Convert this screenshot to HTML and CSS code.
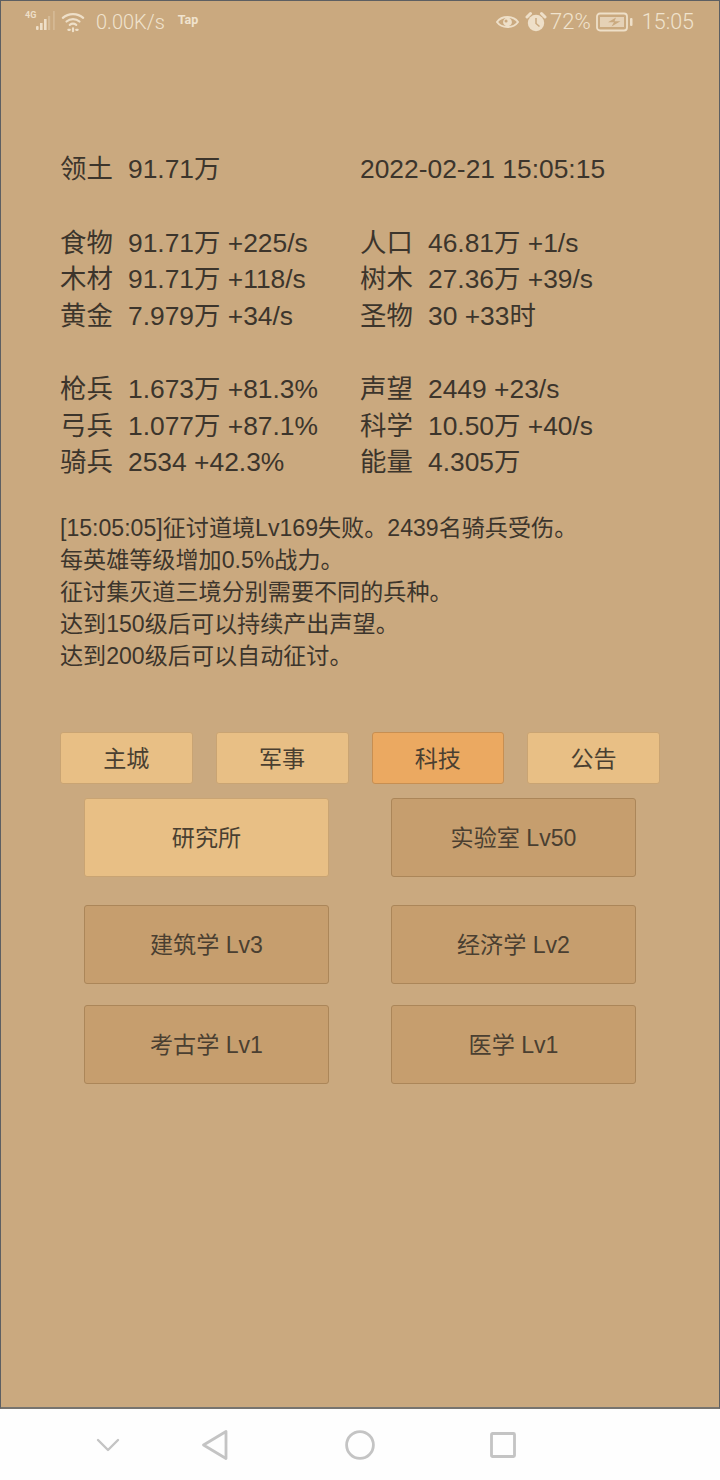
FILE: index.html
```html
<!DOCTYPE html>
<html lang="zh">
<head>
<meta charset="utf-8">
<title>Game</title>
<link rel="stylesheet" href="styles.css">
</head>
<body>
<div class="screen">
  <header class="status">
    <div class="status-left">
      <svg class="ic-signal" width="32" height="24" viewBox="0 0 32 24">
        <text x="1" y="8" class="net">4G</text>
        <rect x="12" y="16" width="2.600" height="4" rx="1" fill="#eedfc8"/>
        <rect x="16" y="13" width="2.600" height="7" fill="#eedfc8"/>
        <rect x="20" y="9" width="2.600" height="11" fill="#eedfc8"/>
        <rect x="24" y="6" width="2.200" height="14" fill="#eedfc8" opacity=".35"/>
        <rect x="29" y="1" width="1.800" height="19" fill="#eedfc8" opacity=".3"/>
      </svg>
      <svg class="ic-wifi" width="24" height="22" viewBox="0 0 26 22" fill="none" stroke="#eedfc8" stroke-width="2.400" stroke-linecap="round">
        <path d="M2 6.500C8 1 18 1 24 6.500"/>
        <path d="M6 10.500C10 7 16 7 20 10.500"/>
        <path d="M9.500 14C11.500 12.500 14.500 12.500 16.500 14"/>
        <path d="M8 19.500h1.500M13 18v3M16.500 19.500h1.500"/>
      </svg>
      <span class="speed">0.00K/s</span>
      <span class="tap">Tap</span>
    </div>
    <div class="status-right">
      <svg width="23" height="16" viewBox="0 0 24 16">
        <path d="M1 8C6 1 18 1 23 8C18 15 6 15 1 8Z" fill="none" stroke="#eedfc8" stroke-width="2"/>
        <circle cx="12" cy="8" r="4.600" fill="#eedfc8"/>
        <circle cx="10.500" cy="7" r="1.600" fill="#caa97f"/>
      </svg>
      <svg class="ic-alarm" width="22" height="22" viewBox="0 0 22 22">
        <circle cx="11" cy="12" r="8.200" fill="#eedfc8"/>
        <path d="M2 6L5.500 2.500M20 6L16.500 2.500" stroke="#eedfc8" stroke-width="3" stroke-linecap="round"/>
        <path d="M11 7v5.500l3.500 3" fill="none" stroke="#caa97f" stroke-width="1.500"/>
      </svg>
      <span class="batt-text">72%</span>
      <svg class="ic-batt" width="37" height="20" viewBox="0 0 37 20">
        <rect x="1" y="1.500" width="30" height="17" rx="3" fill="none" stroke="#eedfc8" stroke-width="1.800"/>
        <rect x="4" y="5" width="24" height="10" fill="#eedfc8" opacity=".75"/>
        <path d="M20 5.500l-8 4.800h6l-2.500 4.200 9-5.200h-6z" fill="#caa97f"/>
        <rect x="34" y="6" width="2.500" height="8" rx="1" fill="#eedfc8"/>
      </svg>
      <span class="clock">15:05</span>
    </div>
  </header>

  <main class="content">
    <section class="stats">
      <div class="cell"><b>领土</b><span>91.71万</span></div>
      <div class="cell"><span class="solo">2022-02-21 15:05:15</span></div>
      <div class="blank"></div>
      <div class="cell"><b>食物</b><span>91.71万 +225/s</span></div>
      <div class="cell"><b>人口</b><span>46.81万 +1/s</span></div>
      <div class="cell"><b>木材</b><span>91.71万 +118/s</span></div>
      <div class="cell"><b>树木</b><span>27.36万 +39/s</span></div>
      <div class="cell"><b>黄金</b><span>7.979万 +34/s</span></div>
      <div class="cell"><b>圣物</b><span>30 +33时</span></div>
      <div class="blank"></div>
      <div class="cell"><b>枪兵</b><span>1.673万 +81.3%</span></div>
      <div class="cell"><b>声望</b><span>2449 +23/s</span></div>
      <div class="cell"><b>弓兵</b><span>1.077万 +87.1%</span></div>
      <div class="cell"><b>科学</b><span>10.50万 +40/s</span></div>
      <div class="cell"><b>骑兵</b><span>2534 +42.3%</span></div>
      <div class="cell"><b>能量</b><span>4.305万</span></div>
    </section>

    <section class="log">
      <p>[15:05:05]征讨道境Lv169失败。2439名骑兵受伤。</p>
      <p>每英雄等级增加0.5%战力。</p>
      <p>征讨集灭道三境分别需要不同的兵种。</p>
      <p>达到150级后可以持续产出声望。</p>
      <p>达到200级后可以自动征讨。</p>
    </section>

    <nav class="tabs">
      <button class="tab">主城</button>
      <button class="tab">军事</button>
      <button class="tab active">科技</button>
      <button class="tab">公告</button>
    </nav>

    <section class="actions">
      <button class="act light">研究所</button>
      <button class="act">实验室 Lv50</button>
      <button class="act second">建筑学 Lv3</button>
      <button class="act second">经济学 Lv2</button>
      <button class="act">考古学 Lv1</button>
      <button class="act">医学 Lv1</button>
    </section>
  </main>
</div>
<footer class="navbar">
  <svg class="nv-down" width="24" height="14" viewBox="0 0 24 14" fill="none" stroke="#c4c4c4" stroke-width="2.400" stroke-linecap="round" stroke-linejoin="round"><path d="M2 2l10 10L22 2"/></svg>
  <svg class="nv-back" width="26" height="30" viewBox="0 0 26 30" fill="none" stroke="#c4c4c4" stroke-width="2.800" stroke-linejoin="round"><path d="M24 1.500V28.500L1.500 15Z"/></svg>
  <svg class="nv-home" width="30" height="30" viewBox="0 0 30 30" fill="none" stroke="#c4c4c4" stroke-width="2.800"><circle cx="15" cy="15" r="13.400"/></svg>
  <svg class="nv-recent" width="26" height="26" viewBox="0 0 26 26" fill="none" stroke="#c4c4c4" stroke-width="2.800" stroke-linejoin="round"><rect x="1.500" y="1.500" width="23" height="23" rx="1"/></svg>
</footer>
</body>
</html>
```
FILE: styles.css
```css
* { box-sizing: border-box; }
html, body { margin: 0; padding: 0; }
body {
  width: 720px;
  height: 1480px;
  background: #fefefe;
  font-family: "Liberation Sans", "Noto Sans CJK SC", sans-serif;
  overflow: hidden;
}
.screen {
  height: 1409px;
  background: #caa97f;
  border: 1px solid #5d5f62;
  border-bottom-width: 2px;
  border-bottom-color: #77746f;
}
.status {
  height: 41px;
  display: flex;
  justify-content: space-between;
  align-items: center;
  color: #f0e3ce;
  padding: 0 25px 0 23px;
}
.status-left, .status-right { display: flex; align-items: center; }
.net { font: 700 9px "Roboto", sans-serif; fill: #eedfc8; }
.ic-wifi { margin-left: 5px; }
.speed { font: 300 20px "Roboto", sans-serif; margin-left: 11px; }
.tap { font: 700 12.500px "Roboto", sans-serif; margin-left: 13px; margin-top: -4px; }
.status-right svg { flex: none; }
.ic-alarm { margin-left: 6px; }
.batt-text { font: 300 22px "Roboto", sans-serif; margin-left: 3px; }
.ic-batt { margin-left: 5px; }
.clock { font: 300 21.500px "Roboto", sans-serif; margin-left: 9px; }

.content { padding: 0 59px; color: #3c352c; }
.stats {
  margin-top: 109.400px;
  display: grid;
  grid-template-columns: 300px 1fr;
  grid-auto-rows: 36.600px;
  font-size: 26.400px;
  line-height: 36.600px;
}
.cell { display: flex; white-space: nowrap; }
.cell b { font-weight: 400; width: 68px; flex: none; }
.blank { grid-column: 1 / -1; }
.log {
  margin-top: 31.600px;
  font-size: 23.100px;
  line-height: 32px;
}
.log p { margin: 0; white-space: nowrap; }

button {
  font-family: inherit;
  color: #4a3f31;
  border-radius: 3px;
  padding: 0 0 3px;
  cursor: pointer;
}
.tabs {
  margin-top: 60px;
  display: grid;
  grid-template-columns: repeat(4, 1fr);
  column-gap: 23px;
}
.tab {
  height: 52px;
  font-size: 23.100px;
  background: #e8bf85;
  border: 1px solid #c9a473;
}
.tab.active { background: #eba961; border-color: #c78f52; }
.actions {
  margin-top: 14px;
  padding: 0 24px;
  display: grid;
  grid-template-columns: 245px 245px;
  justify-content: space-between;
}
.act {
  height: 79px;
  font-size: 23.100px;
  background: #c69e6e;
  border: 1px solid #ab8659;
}
.act.light { background: #e8bf85; border-color: #c9a473; }
.act:nth-child(n+3) { margin-top: 28px; }
.act:nth-child(n+5) { margin-top: 21px; }

.navbar {
  height: 71px;
  display: flex;
  align-items: center;
}
.nv-down { margin-left: 96px; }
.nv-back { margin-left: 82px; }
.nv-home { margin-left: 117px; }
.nv-recent { margin-left: 115px; }
```
